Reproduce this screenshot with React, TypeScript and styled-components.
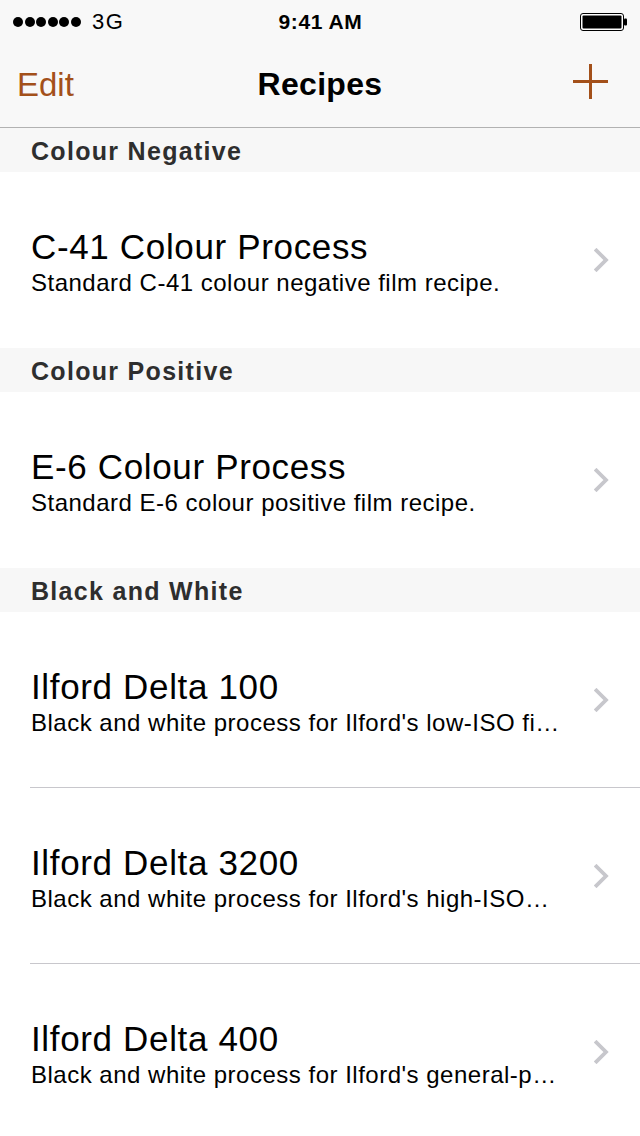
import React from "react";
import styled, { createGlobalStyle } from "styled-components";

const GlobalStyle = createGlobalStyle`
  html, body {
    margin: 0;
    padding: 0;
    overflow: hidden;
    background: #ffffff;
  }
  body {
    font-family: "Liberation Sans", Arial, sans-serif;
    -webkit-font-smoothing: antialiased;
  }
  * { box-sizing: border-box; }
`;

const ACCENT = "#a3501a";

const Screen = styled.div`
  width: 640px;
  height: 1136px;
  overflow: hidden;
  background: #ffffff;
  display: flex;
  flex-direction: column;
`;

const TopChrome = styled.header`
  background: #f8f8f8;
  border-bottom: 1px solid #b2b2b2;
`;

const StatusBar = styled.div`
  height: 40px;
  display: grid;
  grid-template-columns: 1fr auto 1fr;
  align-items: center;
  padding: 0 12px 0 13px;
  color: #000;
`;

const Signal = styled.div`
  display: flex;
  align-items: center;
  gap: 1.5px;
  padding-top: 1px;
`;

const Dot = styled.span`
  width: 10px;
  height: 10px;
  border-radius: 50%;
  background: #000;
`;

const Carrier = styled.span`
  margin-left: 10px;
  font-size: 22px;
  letter-spacing: 1.5px;
  line-height: 40px;
  padding-top: 1px;
`;

const Time = styled.div`
  font-size: 21px;
  font-weight: 700;
  letter-spacing: 0.6px;
  line-height: 40px;
  padding-top: 1px;
`;

const BatteryWrap = styled.div`
  justify-self: end;
  display: flex;
  align-items: center;
  padding-top: 1px;
`;

const NavBar = styled.nav`
  height: 87px;
  display: grid;
  grid-template-columns: 1fr auto 1fr;
  align-items: center;
`;

const EditButton = styled.button`
  justify-self: start;
  background: none;
  border: 0;
  padding: 2px 0 0 17px;
  font-family: inherit;
  font-size: 33px;
  color: ${ACCENT};
  line-height: 40px;
`;

const NavTitle = styled.h1`
  margin: 0;
  font-size: 32px;
  font-weight: 700;
  letter-spacing: 0.3px;
  color: #000;
  line-height: 40px;
`;

const AddButton = styled.button`
  justify-self: end;
  background: none;
  border: 0;
  padding: 0;
  margin: 0 32px 4px 0;
  width: 35px;
  height: 35px;
  display: flex;
`;

const List = styled.main`
  display: flex;
  flex-direction: column;
`;

const SectionHeader = styled.div`
  height: 44px;
  line-height: 44px;
  padding: 1px 0 0 31px;
  background: #f7f7f7;
  font-size: 25px;
  font-weight: 700;
  letter-spacing: 1.3px;
  color: #2e2e2e;
`;

const Row = styled.div`
  padding-left: 30px;
  background: #ffffff;
`;

const RowInner = styled.div<{ $separator: boolean }>`
  height: 176px;
  display: flex;
  align-items: center;
  padding: 0 31px 0 1px;
  border-bottom: ${(p) => (p.$separator ? "1px solid #c8c7cc" : "0")};
`;

const TextColumn = styled.div`
  flex: 1;
  min-width: 0;
  padding-top: 5px;
  margin-right: 24px;
`;

const Title = styled.div`
  font-size: 35px;
  line-height: 40px;
  letter-spacing: 0.65px;
  color: #000;
  white-space: nowrap;
`;

const Subtitle = styled.div`
  margin-top: 1px;
  font-size: 24px;
  line-height: 30px;
  letter-spacing: 0.5px;
  color: #000;
  white-space: nowrap;
  overflow: hidden;
  text-overflow: ellipsis;
`;

const Chevron = () => (
  <svg width="15" height="24" viewBox="0 0 15 24" aria-hidden="true">
    <polyline
      points="2.5,2.5 12,12 2.5,21.5"
      fill="none"
      stroke="#c7c7cc"
      strokeWidth="3.8"
      strokeLinecap="square"
      strokeLinejoin="miter"
    />
  </svg>
);

const Battery = () => (
  <svg width="48" height="18" viewBox="0 0 48 18" aria-hidden="true">
    <rect x="0.5" y="0.5" width="43" height="17" rx="2.5" fill="#fff" stroke="#000" strokeWidth="1" />
    <rect x="2.5" y="2.5" width="39" height="13" rx="1" fill="#000" />
    <rect x="44" y="5.5" width="3" height="7" rx="1" fill="#000" />
  </svg>
);

const PlusIcon = () => (
  <svg width="35" height="35" viewBox="0 0 35 35" aria-hidden="true">
    <rect x="16" y="0" width="3" height="35" fill={ACCENT} />
    <rect x="0" y="16" width="35" height="3" fill={ACCENT} />
  </svg>
);

type Recipe = { title: string; subtitle: string };
type Section = { name: string; recipes: Recipe[] };

const sections: Section[] = [
  {
    name: "Colour Negative",
    recipes: [
      { title: "C-41 Colour Process", subtitle: "Standard C-41 colour negative film recipe." },
    ],
  },
  {
    name: "Colour Positive",
    recipes: [
      { title: "E-6 Colour Process", subtitle: "Standard E-6 colour positive film recipe." },
    ],
  },
  {
    name: "Black and White",
    recipes: [
      { title: "Ilford Delta 100", subtitle: "Black and white process for Ilford's low-ISO fi…" },
      { title: "Ilford Delta 3200", subtitle: "Black and white process for Ilford's high-ISO…" },
      { title: "Ilford Delta 400", subtitle: "Black and white process for Ilford's general-p…" },
    ],
  },
];

export default function App() {
  return (
    <>
      <GlobalStyle />
      <Screen>
        <TopChrome>
          <StatusBar>
            <Signal>
              {[0, 1, 2, 3, 4, 5].map((i) => (
                <Dot key={i} />
              ))}
              <Carrier>3G</Carrier>
            </Signal>
            <Time>9:41 AM</Time>
            <BatteryWrap>
              <Battery />
            </BatteryWrap>
          </StatusBar>
          <NavBar>
            <EditButton>Edit</EditButton>
            <NavTitle>Recipes</NavTitle>
            <AddButton aria-label="Add">
              <PlusIcon />
            </AddButton>
          </NavBar>
        </TopChrome>
        <List>
          {sections.map((section) => (
            <React.Fragment key={section.name}>
              <SectionHeader>{section.name}</SectionHeader>
              {section.recipes.map((r) => (
                <Row key={r.title}>
                  <RowInner $separator={section.recipes.length > 1}>
                    <TextColumn>
                      <Title>{r.title}</Title>
                      <Subtitle>{r.subtitle}</Subtitle>
                    </TextColumn>
                    <Chevron />
                  </RowInner>
                </Row>
              ))}
            </React.Fragment>
          ))}
        </List>
      </Screen>
    </>
  );
}
